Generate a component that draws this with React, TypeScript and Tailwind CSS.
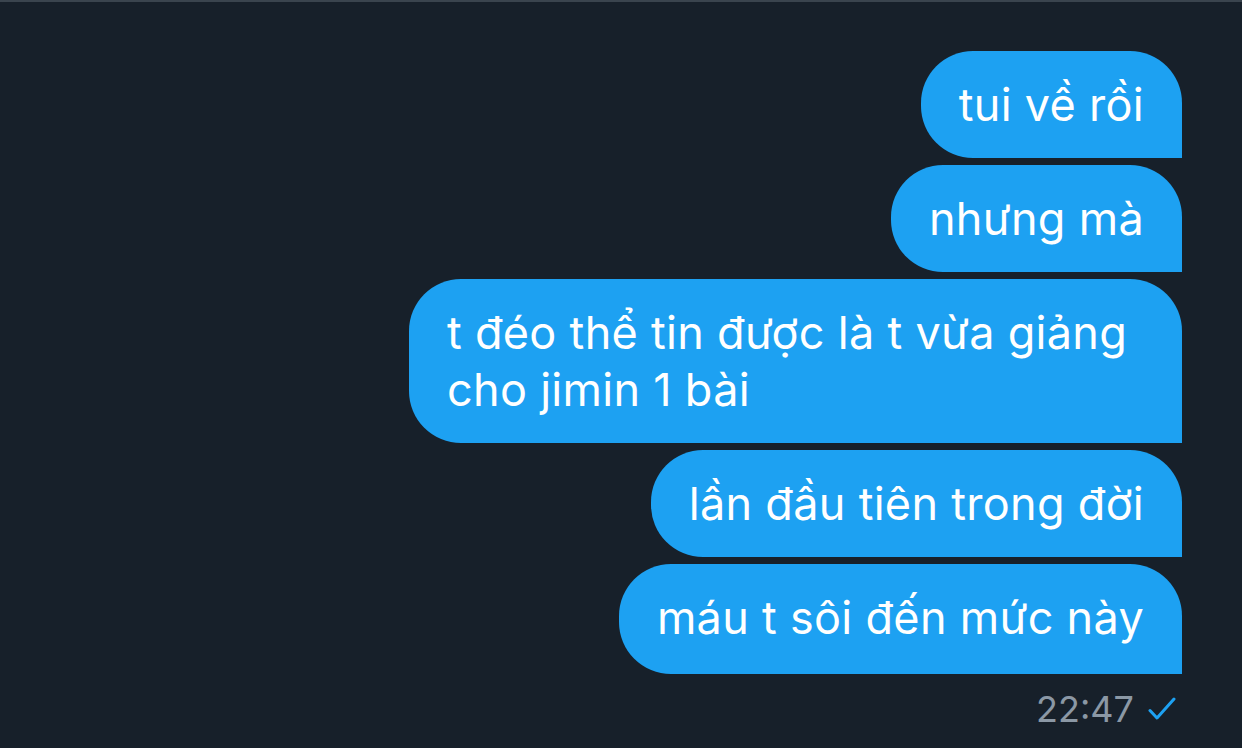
import React from 'react';

const messages = [
  'tui về rồi',
  'nhưng mà',
  't đéo thể tin được là t vừa giảng cho jimin 1 bài',
  'lần đầu tiên trong đời',
  'máu t sôi đến mức này',
];

export default function App() {
  return (
    <div
      className="w-[1242px] h-[748px] bg-[#17202a] border-t-2 border-[#3a444e] overflow-hidden"
      style={{ fontFamily: 'Inter, "Noto Sans", sans-serif' }}
    >
      <div className="flex flex-col items-end gap-[7px] pt-[49px] pr-[60px]">
        {messages.map((m, i) => (
          <div
            key={m}
            className={`max-w-[773px] bg-[#1da1f2] text-white text-[45px] tracking-[0.3px] leading-[57px] pl-[38px] pr-[38px] pt-[25px] rounded-[52px] rounded-br-none ${
              i === messages.length - 1 ? 'pb-[28px]' : 'pb-[25px]'
            }`}
          >
            {m}
          </div>
        ))}
        <div className="flex items-center gap-[14px] mt-[8px] pr-[6px]">
          <span className="text-[36px] leading-[40px] text-[#8b98a5]">22:47</span>
          <svg width="28" height="24" viewBox="0 0 28 24" fill="none">
            <path d="M2 13.5L9 21L26 2" stroke="#1da1f2" strokeWidth="3" strokeLinecap="round" strokeLinejoin="round" />
          </svg>
        </div>
      </div>
    </div>
  );
}
